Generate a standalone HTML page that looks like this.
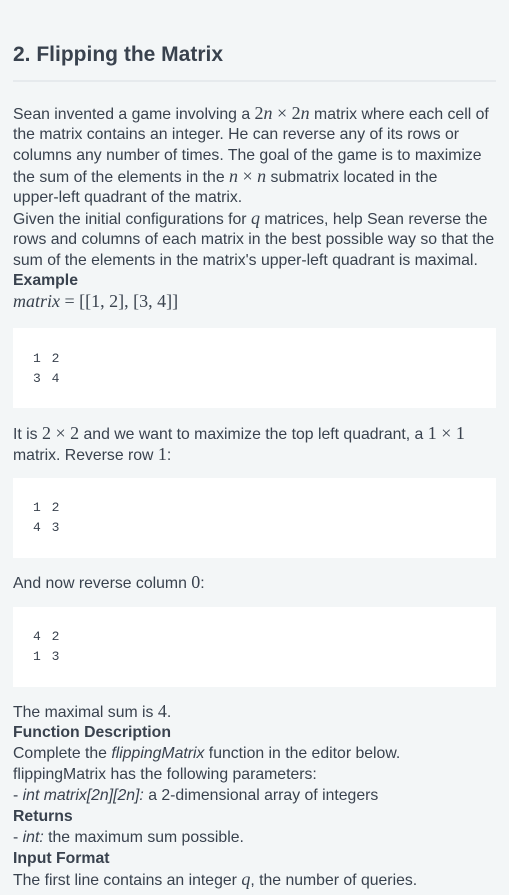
<!DOCTYPE html>
<html><head><meta charset="utf-8"><style>
html,body{margin:0;padding:0;background:#f3f6f7;width:509px;height:895px;overflow:hidden}
body{position:relative;font-family:"Liberation Sans",sans-serif;color:#39424e;font-size:15.8px}
.l{position:absolute;left:13px;height:21px;line-height:21px;white-space:nowrap}
.m{font-family:"Liberation Serif",serif;font-size:18px}
.mi{font-family:"Liberation Serif",serif;font-style:italic;font-size:18px}
b{font-weight:bold}
.box{position:absolute;left:13px;width:483px;height:80px;background:#fff}
.c{position:absolute;left:33px;font-family:"Liberation Mono",monospace;font-size:13px;line-height:20px;white-space:pre;color:#39424e;letter-spacing:1.5px}
h1{position:absolute;left:13px;top:42px;margin:0;font-size:21px;line-height:26px;font-weight:bold;color:#39424e}
.rule{position:absolute;left:13px;top:80px;width:483px;height:2px;background:#e6eaed}
</style></head><body>
<h1>2. Flipping the Matrix</h1>
<div class="rule"></div>
<div class="l" style="top:103px">Sean invented a game involving a <span class="m">2<i>n</i> × 2<i>n</i></span> matrix where each cell of</div>
<div class="l" style="top:124px">the matrix contains an integer. He can reverse any of its rows or</div>
<div class="l" style="top:145px">columns any number of times. The goal of the game is to maximize</div>
<div class="l" style="top:166px">the sum of the elements in the <span class="m"><i>n</i> × <i>n</i></span> submatrix located in the</div>
<div class="l" style="top:187px">upper-left quadrant of the matrix.</div>
<div class="l" style="top:208px">Given the initial configurations for <span class="mi">q</span> matrices, help Sean reverse the</div>
<div class="l" style="top:229px">rows and columns of each matrix in the best possible way so that the</div>
<div class="l" style="top:250px">sum of the elements in the matrix's upper-left quadrant is maximal.</div>
<div class="l" style="top:270px"><b>Example</b></div>
<div class="l" style="top:291px"><span class="m"><i>matrix</i> = [[1, 2], [3, 4]]</span></div>
<div class="box" style="top:328px"></div>
<div class="c" style="top:349px">1 2
3 4</div>
<div class="l" style="top:423px">It is <span class="m">2 × 2</span> and we want to maximize the top left quadrant, a <span class="m">1 × 1</span></div>
<div class="l" style="top:444px">matrix. Reverse row <span class="m">1</span>:</div>
<div class="box" style="top:478px"></div>
<div class="c" style="top:498px">1 2
4 3</div>
<div class="l" style="top:572px">And now reverse column <span class="m">0</span>:</div>
<div class="box" style="top:607px"></div>
<div class="c" style="top:627px">4 2
1 3</div>
<div class="l" style="top:701px">The maximal sum is <span class="m">4</span>.</div>
<div class="l" style="top:722px"><b>Function Description</b></div>
<div class="l" style="top:743px">Complete the <i>flippingMatrix</i> function in the editor below.</div>
<div class="l" style="top:764px">flippingMatrix has the following parameters:</div>
<div class="l" style="top:785px">- <i>int matrix[2n][2n]:</i> a 2-dimensional array of integers</div>
<div class="l" style="top:806px"><b>Returns</b></div>
<div class="l" style="top:827px">- <i>int:</i> the maximum sum possible.</div>
<div class="l" style="top:848px"><b>Input Format</b></div>
<div class="l" style="top:869px">The first line contains an integer <span class="mi">q</span>, the number of queries.</div>
</body></html>
